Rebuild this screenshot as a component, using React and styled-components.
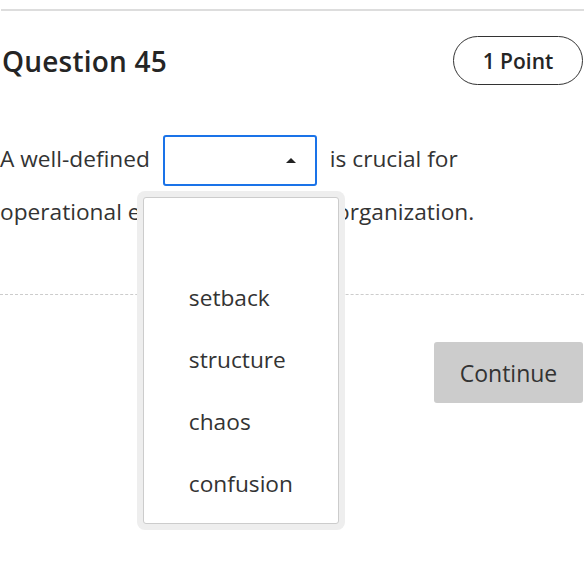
import React from 'react';
import styled, { createGlobalStyle } from 'styled-components';

const GlobalStyle = createGlobalStyle`
    html, body {
        margin: 0;
        padding: 0;
        background: #ffffff;
    }
    body {
        font-family: 'Open Sans', 'Noto Sans', sans-serif;
        color: #333333;
    }
`

// 전체 영역
const Page = styled.div`
    width: 584px;
    min-height: 587px;
    padding-top: 9px;
    box-sizing: border-box;
`
// 상단 구분선
const TopRule = styled.div`
    height: 2px;
    background-color: #dddddd;
    margin-left: 1px;
`
// 헤더
const Header = styled.div`
    display: flex;
    justify-content: space-between;
    align-items: center;
    padding: 25px 1px 0 2px;
`
const Title = styled.h2`
    margin: 0;
    font-size: 28px;
    font-weight: 600;
    color: #252525;
    letter-spacing: 0.2px;
`
const PointBadge = styled.div`
    width: 130px;
    height: 49px;
    box-sizing: border-box;
    border: 1px solid #333333;
    border-radius: 25px;
    display: flex;
    justify-content: center;
    align-items: center;
    font-size: 21px;
    font-weight: 600;
    color: #252525;
`
// 문제 본문
const Prompt = styled.p`
    margin: 48px 0 0 0;
    font-size: 22.7px;
    line-height: 51px;
    color: #333333;
`
const SelectWrap = styled.span`
    position: relative;
    display: inline-block;
    vertical-align: middle;
    margin: 0 13px 0 13px;
`
const SelectBox = styled.div`
    width: 154px;
    height: 51px;
    box-sizing: border-box;
    border: 2px solid #1a73e8;
    border-radius: 3px;
    display: flex;
    justify-content: flex-end;
    align-items: center;
    padding-right: 19px;
`
const Caret = styled.span`
    width: 0;
    height: 0;
    border-left: 5px solid transparent;
    border-right: 5px solid transparent;
    border-bottom: 5px solid #222222;
`
// 드롭다운 목록
const Dropdown = styled.div`
    position: absolute;
    top: 56px;
    left: -26px;
    width: 208px;
    padding: 6px;
    box-sizing: border-box;
    background-color: #eeeeee;
    border-radius: 8px;
    z-index: 10;
`
const OptionList = styled.ul`
    margin: 0;
    padding: 7px 0 8px 0;
    list-style: none;
    background-color: #ffffff;
    border: 1px solid #cccccc;
    border-radius: 3px;
`
const Option = styled.li`
    height: 62px;
    line-height: 62px;
    padding-left: 45px;
    font-size: 22.7px;
    color: #333333;
`
// 하단
const DashedRule = styled.div`
    margin-top: 57px;
    border-top: 1px dashed #cccccc;
`
const Footer = styled.div`
    display: flex;
    justify-content: flex-end;
    padding: 47px 1px 0 0;
`
const ContinueButton = styled.button`
    width: 149px;
    height: 61px;
    border: none;
    border-radius: 3px;
    background-color: #cccccc;
    font-family: 'Open Sans', 'Noto Sans', sans-serif;
    font-size: 23px;
    color: #333333;
`

const options = ['', 'setback', 'structure', 'chaos', 'confusion'];

export default function App() {
    return (
        <Page>
            <GlobalStyle />
            <TopRule />
            <Header>
                <Title>Question 45</Title>
                <PointBadge>1 Point</PointBadge>
            </Header>
            <Prompt>
                A well-defined
                <SelectWrap>
                    <SelectBox>
                        <Caret />
                    </SelectBox>
                    <Dropdown>
                        <OptionList>
                            {options.map((o, i) => (
                                <Option key={i}>{o}</Option>
                            ))}
                        </OptionList>
                    </Dropdown>
                </SelectWrap>
                is crucial for operational efficiency within an organization.
            </Prompt>
            <DashedRule />
            <Footer>
                <ContinueButton>Continue</ContinueButton>
            </Footer>
        </Page>
    )
}
